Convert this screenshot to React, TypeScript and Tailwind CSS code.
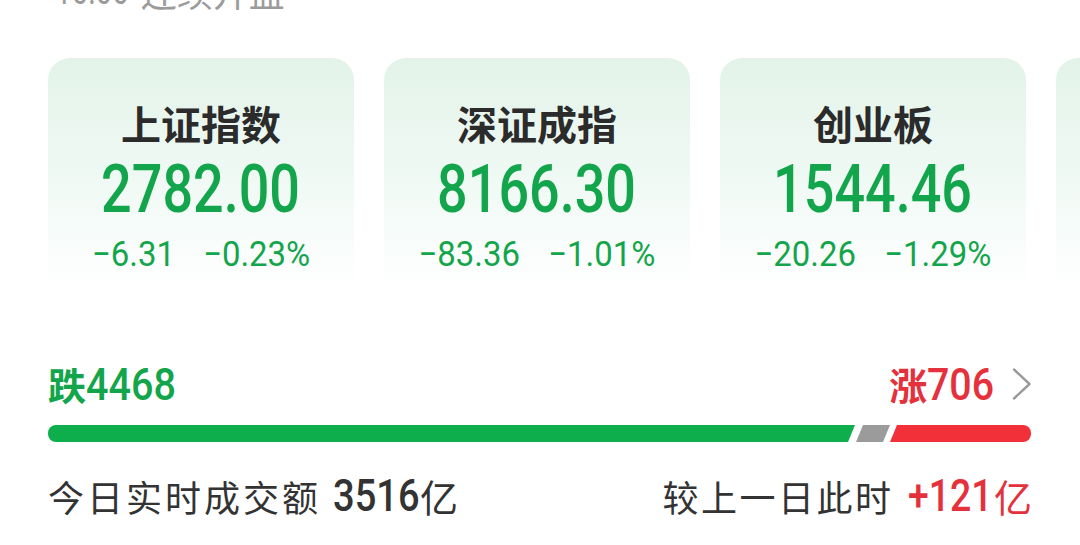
import React from 'react';

interface IndexCard {
  name: string;
  price: string;
  change: string;
  percent: string;
}

const cards: IndexCard[] = [
  { name: '上证指数', price: '2782.00', change: '−6.31', percent: '−0.23%' },
  { name: '深证成指', price: '8166.30', change: '−83.36', percent: '−1.01%' },
  { name: '创业板', price: '1544.46', change: '−20.26', percent: '−1.29%' },
  { name: '北证50', price: '', change: '', percent: '' },
];

// digits are a condensed face in the original, so Roboto gets squeezed
const num = "font-['Roboto',sans-serif]";

const Card: React.FC<{ card: IndexCard }> = ({ card }) => (
  <div className="w-[306px] h-[232px] shrink-0 rounded-t-[22px] bg-gradient-to-b from-[#e3f3e9] via-[#eff9f4] to-white flex flex-col items-center">
    <div className="mt-[45px] text-[40px] leading-[40px] font-bold text-[#2b2b2b]">{card.name}</div>
    <div className={`${num} mt-[13px] h-[67px] text-[67px] leading-[67px] font-medium text-[#13a54b] scale-x-[0.805]`}>
      {card.price}
    </div>
    <div className={`${num} mt-[14px] text-[35px] leading-[35px] text-[#13a54b] flex gap-[30px] scale-x-[0.94]`}>
      <span>{card.change}</span>
      <span>{card.percent}</span>
    </div>
  </div>
);

const BreadthBar: React.FC = () => (
  <svg width="983" height="17" viewBox="0 0 983 17" className="block">
    <defs>
      <clipPath id="bar-clip">
        <rect x="0" y="0" width="983" height="17" rx="8" />
      </clipPath>
    </defs>
    <g clipPath="url(#bar-clip)">
      <polygon points="0,0 807,0 800,17 0,17" fill="#0fae4d" />
      <polygon points="815,0 842,0 835,17 808,17" fill="#9b9b9b" />
      <polygon points="849,0 983,0 983,17 842,17" fill="#f2303a" />
    </g>
  </svg>
);

const Chevron: React.FC = () => (
  <svg width="20" height="32" viewBox="0 0 20 32" className="ml-[18px]">
    <polyline points="2,1.5 17.5,16 2,30.5" fill="none" stroke="#9a9a9a" strokeWidth="2.4" strokeLinecap="round" strokeLinejoin="round" />
  </svg>
);

export default function App() {
  return (
    <div className="w-[1080px] h-[545px] overflow-hidden bg-white font-['Noto_Sans_CJK_SC',sans-serif]">
      <div className="h-[58px] pl-[55px] flex flex-col">
        <div className="-mt-[27px] flex items-center text-[36px] leading-[36px] text-[#9b9b9b]">
          <span className={`${num} inline-block text-[38px] origin-left scale-x-[0.78] -mr-[21px]`}>10:00</span>
          <span className="ml-[12px]">连续开盘</span>
        </div>
      </div>

      <div className="flex gap-[30px] pl-[48px]">
        {cards.map((c) => (
          <Card key={c.name} card={c} />
        ))}
      </div>

      <div className="px-[48px] mt-[71px]">
        <div className="flex items-center justify-between h-[46px]">
          <div className="flex items-center text-[#13a54b]">
            <span className="text-[38px] font-bold leading-none">跌</span>
            <span className={`${num} inline-block text-[45px] leading-none font-medium origin-left scale-x-[0.88]`}>4468</span>
          </div>
          <div className="flex items-center">
            <span className="text-[38px] font-bold leading-none text-[#e5313c]">涨</span>
            <span className={`${num} inline-block text-[45px] leading-none font-medium text-[#e5313c] origin-left scale-x-[0.874] -mr-[10px]`}>706</span>
            <Chevron />
          </div>
        </div>
        <div className="mt-[18px]">
          <BreadthBar />
        </div>
        <div className="mt-[34px] flex items-center justify-between h-[40px] text-[#333333]">
          <div className="flex items-center">
            <span className="text-[36px] leading-none tracking-[3px]">今日实时成交额</span>
            <span className={`${num} inline-block ml-[12px] text-[44px] leading-none font-medium origin-left scale-x-[0.865] -mr-[13px]`}>3516</span>
            <span className="text-[38px] leading-none">亿</span>
          </div>
          <div className="flex items-center">
            <span className="text-[36px] leading-none tracking-[2.5px]">较上一日此时</span>
            <span className={`${num} inline-block ml-[14px] text-[44px] leading-none font-medium text-[#e5313c] origin-left scale-x-[0.85] -mr-[15px]`}>+121</span>
            <span className="text-[38px] leading-none text-[#e5313c] ml-[2px]">亿</span>
          </div>
        </div>
      </div>
    </div>
  );
}
